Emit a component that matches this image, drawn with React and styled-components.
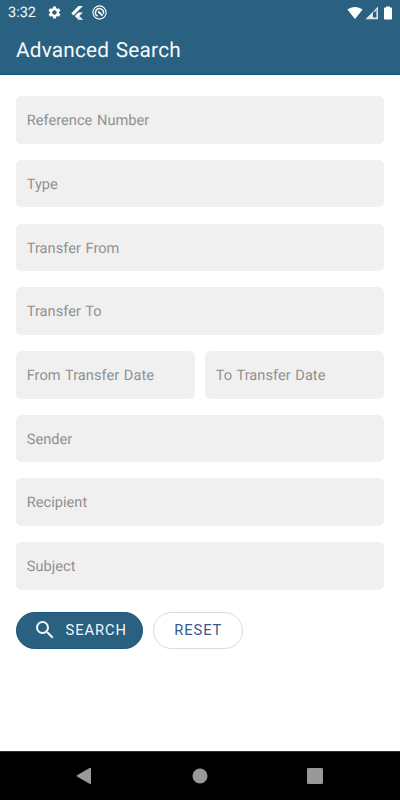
import styled, { createGlobalStyle } from "styled-components";
import { MdSettings, MdSearch } from "react-icons/md";

const GlobalStyle = createGlobalStyle`
  * {
    box-sizing: border-box;
  }
  body {
    margin: 0;
    background: #fff;
    font-family: Roboto, sans-serif;
    text-rendering: geometricPrecision;
  }
`;

// Styled Components
const Screen = styled.div`
  display: flex;
  flex-direction: column;
  width: 400px;
  height: 800px;
  overflow: hidden;
  background: #fff;
`;

const Header = styled.header`
  height: 75px;
  background: #2a6180;
  border-bottom: 1px solid #0f557a;
  color: #f6f9fb;
`;

const StatusBar = styled.div`
  display: flex;
  align-items: center;
  height: 25px;
  padding: 0 7px 0 8px;
`;

const Clock = styled.span`
  width: 39px;
  font-size: 14.5px;
  line-height: 26px;
`;

const StatusIcons = styled.div`
  display: flex;
  align-items: center;
  gap: ${({ $gap }) => $gap}px;
  margin-left: ${({ $end }) => ($end ? "auto" : "0")};

  svg {
    display: block;
  }
`;

const Title = styled.h1`
  margin: 0;
  padding-left: 16px;
  font-size: 20.8px;
  font-weight: 400;
  line-height: 52px;
  letter-spacing: 0.2px;
  word-spacing: 1.2px;
`;

const Form = styled.form`
  flex: 1;
  padding: 21.3px 16px 0;
`;

const Fields = styled.div`
  display: flex;
  flex-direction: column;
  gap: 16.2px;
`;

const FieldRow = styled.div`
  display: grid;
  grid-template-columns: 1fr 1fr;
  gap: 10px;
`;

const Field = styled.div`
  height: 47.5px;
  padding-left: 10.7px;
  border-radius: 5.5px;
  background: #f0f0f0;
  color: #909090;
  font-size: 14.6px;
  line-height: 49px;
  letter-spacing: 0.03px;
  word-spacing: 1px;
  white-space: nowrap;
`;

const Actions = styled.div`
  display: flex;
  gap: 10.5px;
  margin-top: 22px;
`;

const Button = styled.button`
  display: flex;
  align-items: center;
  justify-content: center;
  gap: 9px;
  width: ${({ $primary }) => ($primary ? "126.5px" : "89.5px")};
  height: 37px;
  padding: 1px 0 0 1px;
  border: 1px solid ${({ $primary }) => ($primary ? "#1c5680" : "#d9dbdd")};
  border-radius: 19px;
  background: ${({ $primary }) => ($primary ? "#2a6180" : "#fff")};
  color: ${({ $primary }) => ($primary ? "#f2f7fa" : "#3a5a8c")};
  font-family: inherit;
  font-size: 14.7px;
  line-height: 19px;
  letter-spacing: 0.95px;

  svg {
    margin-top: -1px;
  }
`;

const NavBar = styled.nav`
  display: flex;
  align-items: center;
  justify-content: space-between;
  height: 49px;
  padding: 0 77px 0 76px;
  border-top: 1px solid #2e2e2e;
  background: #000;
`;

const FlutterIcon = () => (
  <svg width="13" height="16" viewBox="0 0 13 16">
    <path d="M0.3 8.2L7.5 1h4.4L2.5 10.4z" fill="#fff" />
    <path d="M7.5 7.5h4.4L8.3 11.1l3.6 3.7H7.5L3.8 11.1z" fill="#fff" />
    <path d="M6 13.3l2.2-2.2 3.7 3.7H7.5z" fill="#d3dfe8" />
  </svg>
);

const DebugIcon = () => (
  <svg width="15" height="15" viewBox="0 0 15 15" fill="none" stroke="#fff">
    <circle cx="7.5" cy="7.5" r="6.6" strokeWidth="1.1" />
    <path d="M5.6 11.2A4 4 0 1 1 11.3 8.8" strokeWidth="1.5" />
    <path d="M6.2 6.5l4.4 4.1" strokeWidth="1.8" />
  </svg>
);

const WifiIcon = () => (
  <svg width="16" height="14" viewBox="0 0 16 14">
    <path d="M0.4 3.6C4.8 0.1 11.2 0.1 15.6 3.6L8 13z" fill="#fff" />
  </svg>
);

const SignalIcon = () => (
  <svg width="14" height="14" viewBox="0 0 14 14">
    <path d="M0.4 13.2L13 0.6V13.2z" fill="#dbe6ed" />
    <path d="M7.9 7.3L11.6 3.6V5.6H7.9z" fill="#2a6180" />
    <path d="M8 6.9L9.4 6H11.4V11.6H8z" fill="#2a6180" />
  </svg>
);

const BatteryIcon = () => (
  <svg width="10" height="14" viewBox="0 0 10 14">
    <path d="M3 0.4h4v1.2h1.2q.8 0 .8.8v10.3q0 .8-.8.8H1.8q-.8 0-.8-.8V2.4q0-.8.8-.8H3z" fill="#fff" />
  </svg>
);

const BackIcon = () => (
  <svg width="16" height="18" viewBox="0 0 16 18">
    <path d="M1 8.2L14 0.8q1-.5 1 .6v15.2q0 1-1 .5L1 9.6q-1-.7 0-1.4z" fill="#999" />
  </svg>
);

const HomeIcon = () => (
  <svg width="16" height="16" viewBox="0 0 16 16">
    <circle cx="8" cy="8" r="7.5" fill="#999" />
  </svg>
);

const RecentsIcon = () => (
  <svg width="16" height="16" viewBox="0 0 16 16">
    <rect width="16" height="16" rx="1.2" fill="#999" />
  </svg>
);

const topFields = ["Reference Number", "Type", "Transfer From", "Transfer To"];
const bottomFields = ["Sender", "Recipient", "Subject"];

const App = () => {
  return (
    <>
      <GlobalStyle />
      <Screen>
        <Header>
          <StatusBar>
            <Clock>3:32</Clock>
            <StatusIcons $gap={8.5}>
              <MdSettings size={15} color="#fff" />
              <FlutterIcon />
              <DebugIcon />
            </StatusIcons>
            <StatusIcons $gap={2} $end>
              <WifiIcon />
              <SignalIcon />
              <span />
              <BatteryIcon />
            </StatusIcons>
          </StatusBar>
          <Title>Advanced Search</Title>
        </Header>
        <Form>
          <Fields>
            {topFields.map((label) => (
              <Field key={label}>{label}</Field>
            ))}
            <FieldRow>
              <Field>From Transfer Date</Field>
              <Field>To Transfer Date</Field>
            </FieldRow>
            {bottomFields.map((label) => (
              <Field key={label}>{label}</Field>
            ))}
          </Fields>
          <Actions>
            <Button type="button" $primary>
              <MdSearch size={24} />
              SEARCH
            </Button>
            <Button type="button">RESET</Button>
          </Actions>
        </Form>
        <NavBar>
          <BackIcon />
          <HomeIcon />
          <RecentsIcon />
        </NavBar>
      </Screen>
    </>
  );
};

export default App;
